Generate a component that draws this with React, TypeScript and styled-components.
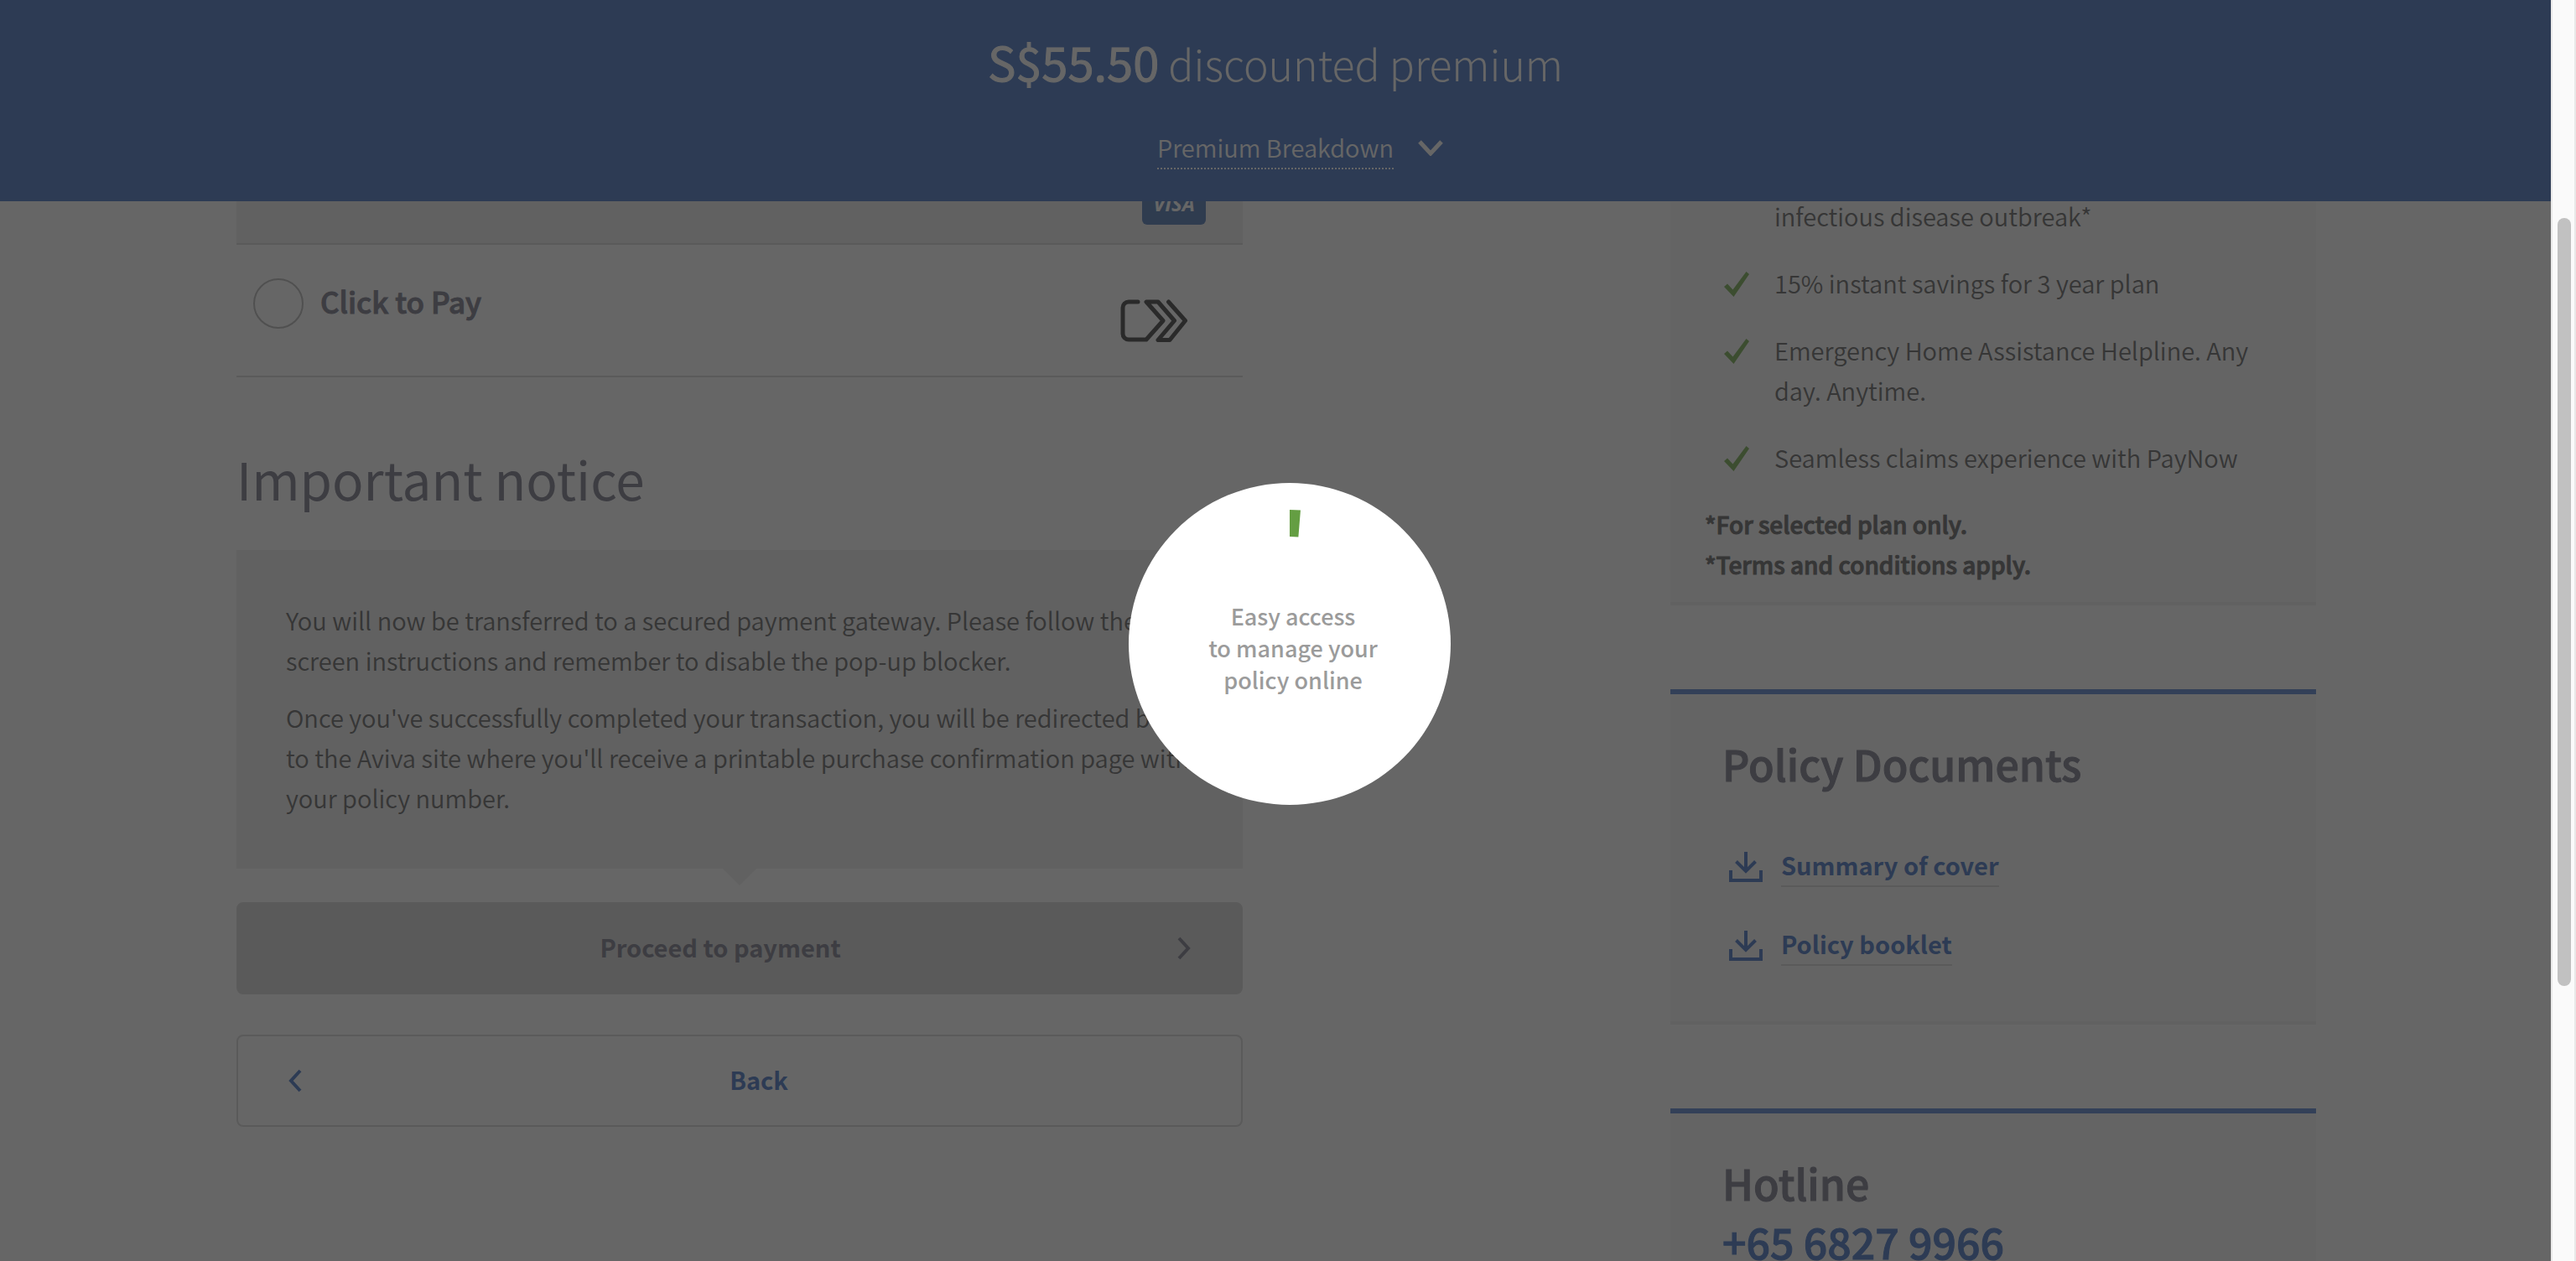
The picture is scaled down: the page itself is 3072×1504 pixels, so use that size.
import React from "react";
import styled, { createGlobalStyle } from "styled-components";

const color = {
  brand: "#7094d2",
  accent: "#80a0dc",
  heading: "#9898a5",
  text: "#878787",
  line: "#e1e1e1",
  panel: "#f2f2f2",
  card: "#fafafa",
  tick: "#96c078",
};

const GlobalStyle = createGlobalStyle`
  *, *::before, *::after { box-sizing: border-box; }
  body {
    margin: 0;
    background: #fff;
    color: ${color.text};
    font-family: "Noto Sans CJK SC", "Source Sans Pro", "Noto Sans", sans-serif;
    font-size: 29px;
    font-weight: 350;
    line-height: 48px;
  }
  h2, h3, p, ul { margin: 0; padding: 0; }
  ul { list-style: none; }
  button { font: inherit; color: inherit; cursor: pointer; }
  a { text-decoration: none; }
  svg { display: block; flex: none; }
`;

const Shell = styled.div`
  display: grid;
  grid-template-columns: minmax(0, 1fr) 30px;
  height: 100vh;
  overflow: hidden;
`;

const Page = styled.div`
  position: relative;
  overflow: hidden;
  background: #fff;
`;

const Header = styled.header`
  position: relative;
  z-index: 1;
  display: flex;
  flex-direction: column;
  align-items: center;
  padding: 35px 0 38px;
  background: ${color.brand};
  color: #fff;
`;

const Premium = styled.p`
  font-size: 50px;
  font-weight: 300;
  line-height: 80px;
`;

const Amount = styled.strong`
  font-size: 56px;
  font-weight: 400;
  line-height: 60px;
  -webkit-text-stroke: 1px currentColor;
`;

const BreakdownToggle = styled.button`
  display: grid;
  grid-template-columns: 60px auto 60px;
  align-items: center;
  margin-top: 36px;
  padding: 0;
  border: 0;
  background: none;

  svg { margin-left: 29px; }
`;

const BreakdownLabel = styled.span`
  grid-column: 2;
  padding-bottom: 1px;
  border-bottom: 2px dotted #fff;
`;

const Content = styled.main`
  display: grid;
  grid-template-columns: minmax(0, 1200fr) minmax(0, 770fr);
  column-gap: 510px;
  align-items: start;
  margin-top: -60px;
  padding: 0 280px 0 282px;
`;

const Method = styled.div<{ $active?: boolean }>`
  display: flex;
  align-items: flex-start;
  gap: 20px;
  padding: 40px ${(p) => (p.$active ? 44 : 66)}px ${(p) => (p.$active ? 22 : 39)}px 20px;
  border-bottom: 2px solid ${color.line};
  background: ${(p) => (p.$active ? color.panel : "transparent")};
`;

const Radio = styled.input`
  appearance: none;
  flex: none;
  width: 60px;
  height: 60px;
  margin: 0;
  border: 2px solid #c8c8c8;
  border-radius: 50%;
`;

const MethodLabel = styled.label`
  flex: 1;
  color: ${color.heading};
  font-size: 35px;
  font-weight: 500;
  line-height: 54px;
  -webkit-text-stroke: 1px currentColor;
`;

const MethodMark = styled.div`
  padding-top: 25px;
`;

const VisaBadge = styled.span`
  width: 76px;
  height: 48px;
  margin-left: auto;
  border-radius: 6px;
  background: #7696c6;
  color: #fff;
  font: italic 700 24px/46px "Open Sans", sans-serif;
  text-align: center;
`;

const NoticeTitle = styled.h2`
  margin: 72px 0 38px;
  color: ${color.heading};
  font-size: 62px;
  font-weight: 400;
  line-height: 96px;
`;

const Notice = styled.section`
  position: relative;
  display: grid;
  gap: 20px;
  padding: 59px 40px 61px 59px;
  background: ${color.panel};

  &::after {
    content: "";
    position: absolute;
    top: 100%;
    left: 50%;
    margin-left: -20px;
    border: 20px solid transparent;
    border-top-color: ${color.panel};
    border-bottom: 0;
  }
`;

const Actions = styled.div`
  display: grid;
  gap: 48px;
  margin-top: 40px;
`;

const Action = styled.button<{ $secondary?: boolean }>`
  display: flex;
  align-items: center;
  gap: 30px;
  height: 110px;
  padding: 0 60px;
  border: 2px solid ${color.line};
  border-radius: 8px;
  background: ${(p) => (p.$secondary ? "#fff" : color.line)};
  color: ${(p) => (p.$secondary ? color.brand : color.heading)};
  font-weight: 700;

  span {
    flex: 1;
    padding-bottom: 4px;
  }
`;

const Side = styled.aside`
  display: grid;
  gap: 100px;
`;

const Benefits = styled.section`
  padding: 53px 60px 21px 41px;
  border-bottom: 4px solid ${color.panel};
  background: ${color.card};
`;

const BenefitList = styled.ul`
  display: grid;
  gap: 32px;
  margin: 0 0 32px 23px;
`;

const Benefit = styled.li`
  display: grid;
  grid-template-columns: 30px minmax(0, 1fr);
  column-gap: 30px;

  svg { margin-top: 11px; }
  span { grid-column: 2; }
`;

const Terms = styled.p`
  font-size: 28px;
  font-weight: 500;
  -webkit-text-stroke: 1px currentColor;
`;

const Card = styled.section`
  padding: 47px 60px 66px 62px;
  border-top: 6px solid ${color.accent};
  border-bottom: 4px solid ${color.panel};
  background: ${color.card};
`;

const CardTitle = styled.h3`
  color: ${color.heading};
  font-size: 50px;
  font-weight: 500;
  line-height: 70px;
  -webkit-text-stroke: 1px currentColor;
`;

const Phone = styled.a`
  display: block;
  color: ${color.brand};
  font-size: 50px;
  font-weight: 500;
  line-height: 70px;
  -webkit-text-stroke: 1px currentColor;
`;

const Documents = styled.ul`
  display: grid;
  gap: 43px;
  margin: 62px 0 0 8px;
`;

const DocumentLink = styled.a`
  display: flex;
  gap: 22px;
  width: fit-content;
  color: ${color.brand};
  font-weight: 700;

  svg { margin-top: 9px; }
  span {
    padding-bottom: 1px;
    border-bottom: 2px solid ${color.line};
  }
`;

const Scrim = styled.div`
  position: absolute;
  inset: 0;
  z-index: 2;
  background: rgba(0, 0, 0, 0.6);
`;

const ScrollTrack = styled.div`
  padding: 260px 4px 0 6px;
  border: solid #e8e8e8;
  border-width: 0 2px;
  background: #fafafa;
`;

const ScrollThumb = styled.div`
  width: 16px;
  height: 916px;
  border-radius: 8px;
  background: #c1c1c1;
`;

const LoaderLayer = styled.div`
  position: fixed;
  inset: 0;
  z-index: 3;
  display: grid;
  place-items: center;
  padding: 32px 0 0 4px;
`;

const Loader = styled.div`
  position: relative;
  display: grid;
  place-items: center;
  width: 384px;
  height: 384px;
  padding: 9px 0 0 8px;
  border-radius: 50%;
  background: #fff;
  color: #9b9b9b;
  font-size: 27px;
  font-weight: 500;
  line-height: 38px;
  text-align: center;

  svg {
    position: absolute;
    inset: 32px;
  }
`;

const Chevron = ({ d, width, height, stroke = 5 }: { d: string; width: number; height: number; stroke?: number }) => (
  <svg width={width} height={height} viewBox={`0 0 ${width} ${height}`} fill="none" stroke="currentColor" strokeWidth={stroke} aria-hidden="true">
    <path d={d} />
  </svg>
);

const Tick = () => (
  <svg width="30" height="30" viewBox="0 0 30 30" fill={color.tick} aria-hidden="true">
    <path d="M0 18L4 14.500L10.500 21.500L26.500 0L30 3L11.500 30Z" />
  </svg>
);

const Download = () => (
  <svg width="40" height="36" viewBox="0 0 40 36" fill="none" stroke="currentColor" strokeWidth="4" aria-hidden="true">
    <path d="M2 22v12h36V22M20 0v23M8.500 11.500L20 23l11.500-11.500" />
  </svg>
);

const ClickToPay = () => (
  <svg width="80" height="52" viewBox="0 0 80 52" fill="none" stroke="#696969" strokeWidth="5" strokeLinejoin="round" strokeLinecap="round" aria-hidden="true">
    <path d="M21 3H10a7 7 0 0 0-7 7v31a7 7 0 0 0 7 7h21L51 25.500 31 3h14l19.500 22.500L45 48.500h14L77.500 25.500 57.500 3" />
  </svg>
);

const benefits = [
  { text: "infectious disease outbreak*", tick: false },
  { text: "15% instant savings for 3 year plan", tick: true },
  { text: "Emergency Home Assistance Helpline. Any day. Anytime.", tick: true },
  { text: "Seamless claims experience with PayNow", tick: true },
];

const documents = ["Summary of cover", "Policy booklet"];

export default function App() {
  return (
    <>
      <GlobalStyle />
      <Shell>
        <Page>
          <Header>
            <Premium>
              <Amount>S$55.50</Amount> discounted premium
            </Premium>
            <BreakdownToggle type="button">
              <BreakdownLabel>Premium Breakdown</BreakdownLabel>
              <Chevron width={30} height={19} d="M2 2l13 14L28 2" />
            </BreakdownToggle>
          </Header>
          <Content>
            <div>
              <Method $active>
                <VisaBadge>VISA</VisaBadge>
              </Method>
              <Method>
                <Radio type="radio" name="method" id="click-to-pay" />
                <MethodLabel htmlFor="click-to-pay">Click to Pay</MethodLabel>
                <MethodMark>
                  <ClickToPay />
                </MethodMark>
              </Method>
              <NoticeTitle>Important notice</NoticeTitle>
              <Notice>
                <p>
                  You will now be transferred to a secured payment gateway. Please follow the on-screen instructions and
                  remember to disable the pop-up blocker.
                </p>
                <p>
                  Once you've successfully completed your transaction, you will be redirected back to the Aviva site
                  where you'll receive a printable purchase confirmation page with your policy number.
                </p>
              </Notice>
              <Actions>
                <Action type="button">
                  <span>Proceed to payment</span>
                  <Chevron width={16} height={28} d="M2 2l11 12L2 26" stroke={4} />
                </Action>
                <Action type="button" $secondary>
                  <Chevron width={16} height={28} d="M14 2L3 14l11 12" stroke={4} />
                  <span>Back</span>
                </Action>
              </Actions>
            </div>
            <Side>
              <Benefits>
                <BenefitList>
                  {benefits.map((b) => (
                    <Benefit key={b.text}>
                      {b.tick && <Tick />}
                      <span>{b.text}</span>
                    </Benefit>
                  ))}
                </BenefitList>
                <Terms>*For selected plan only.</Terms>
                <Terms>*Terms and conditions apply.</Terms>
              </Benefits>
              <Card>
                <CardTitle>Policy Documents</CardTitle>
                <Documents>
                  {documents.map((name) => (
                    <li key={name}>
                      <DocumentLink href="#">
                        <Download />
                        <span>{name}</span>
                      </DocumentLink>
                    </li>
                  ))}
                </Documents>
              </Card>
              <Card>
                <CardTitle>Hotline</CardTitle>
                <Phone href="tel:+6568279966">+65 6827 9966</Phone>
              </Card>
            </Side>
          </Content>
          <Scrim />
        </Page>
        <ScrollTrack>
          <ScrollThumb />
        </ScrollTrack>
      </Shell>
      <LoaderLayer>
        <Loader role="status">
          <svg width="320" height="320" viewBox="0 0 320 320" fill="none" stroke="#649e42" strokeWidth="32" aria-hidden="true">
            <circle cx="160" cy="160" r="144" strokeDasharray="11.700 1000" transform="rotate(-90 160 160)" />
          </svg>
          <p>
            Easy access
            <br />
            to manage your
            <br />
            policy online
          </p>
        </Loader>
      </LoaderLayer>
    </>
  );
}
